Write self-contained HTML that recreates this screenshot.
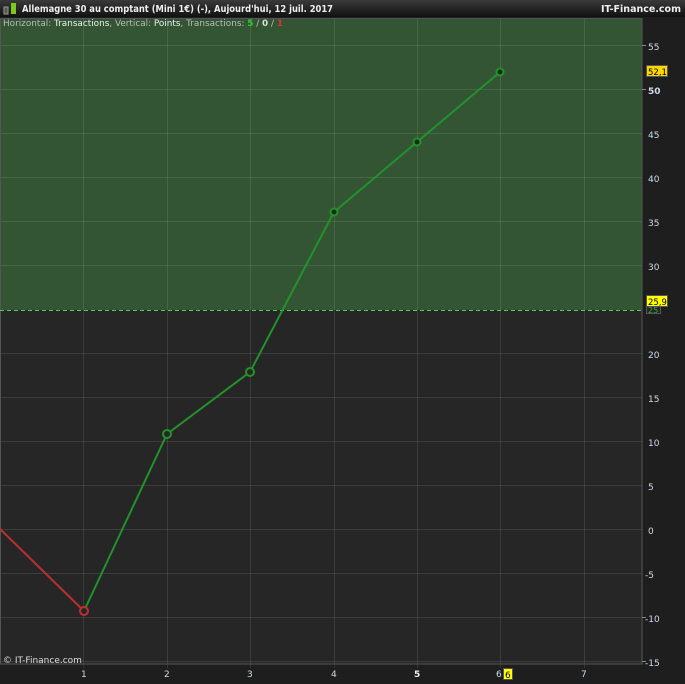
<!DOCTYPE html><html><head><style>body{margin:0;background:#1e1e1e;width:685px;height:680px;overflow:hidden;font-family:"DejaVu Sans",sans-serif}</style></head><body>
<svg width="685" height="680" xmlns="http://www.w3.org/2000/svg" font-family="DejaVu Sans, sans-serif">
<defs><linearGradient id="h" x1="0" y1="0" x2="0" y2="1"><stop offset="0" stop-color="#3a3a3a"/><stop offset="1" stop-color="#111"/></linearGradient></defs>
<rect width="685" height="680" fill="#1e1e1e"/>
<rect width="685" height="17" fill="url(#h)"/>
<rect x="4" y="7" width="4" height="7" fill="#555" stroke="#999" stroke-width="1"/>
<rect x="11" y="3" width="5" height="11" fill="#7ec820"/>
<text x="22" y="12" font-size="9.5" font-weight="bold" fill="#eee" textLength="311" lengthAdjust="spacingAndGlyphs">Allemagne 30 au comptant (Mini 1€) (-), Aujourd'hui, 12 juil. 2017</text>
<text x="681" y="12" font-size="9.5" font-weight="bold" fill="#eee" text-anchor="end">IT-Finance.com</text>
<rect x="0" y="18" width="642" height="292" fill="#335533"/>
<rect x="0" y="310" width="642" height="354" fill="#262626"/>
<g stroke="#ffffff" stroke-opacity="0.1" stroke-width="1">
<line x1="0" y1="45.5" x2="642" y2="45.5"/><line x1="0" y1="89.5" x2="642" y2="89.5"/><line x1="0" y1="133.5" x2="642" y2="133.5"/><line x1="0" y1="177.5" x2="642" y2="177.5"/><line x1="0" y1="221.5" x2="642" y2="221.5"/><line x1="0" y1="265.5" x2="642" y2="265.5"/><line x1="0" y1="353.5" x2="642" y2="353.5"/><line x1="0" y1="397.5" x2="642" y2="397.5"/><line x1="0" y1="441.5" x2="642" y2="441.5"/><line x1="0" y1="485.5" x2="642" y2="485.5"/><line x1="0" y1="529.5" x2="642" y2="529.5"/><line x1="0" y1="573.5" x2="642" y2="573.5"/><line x1="0" y1="617.5" x2="642" y2="617.5"/><line x1="0" y1="661.5" x2="642" y2="661.5"/>
<line x1="83.5" y1="18" x2="83.5" y2="668"/><line x1="167.5" y1="18" x2="167.5" y2="668"/><line x1="250.5" y1="18" x2="250.5" y2="668"/><line x1="334.5" y1="18" x2="334.5" y2="668"/><line x1="417.5" y1="18" x2="417.5" y2="668"/><line x1="500.5" y1="18" x2="500.5" y2="668"/><line x1="584.5" y1="18" x2="584.5" y2="668"/>
</g>
<rect x="0.5" y="18.5" width="641.5" height="645.5" fill="none" stroke="#555"/>
<line x1="0" y1="310.5" x2="642" y2="310.5" stroke="#5c5" stroke-dasharray="4,3"/>
<text x="3" y="26" font-size="9" fill="#bbb" textLength="280" lengthAdjust="spacingAndGlyphs">Horizontal: <tspan fill="#eee">Transactions</tspan>, Vertical: <tspan fill="#eee">Points</tspan>, Transactions: <tspan fill="#3c3" font-weight="bold">5</tspan> / <tspan fill="#ddd" font-weight="bold">0</tspan> / <tspan fill="#d33" font-weight="bold">1</tspan></text>
<polyline points="0,529 84,611" fill="none" stroke="#b83030" stroke-width="2"/>
<polyline points="84,611 167,434 250,372 334,212 417,142 500,72" fill="none" stroke="#22922a" stroke-width="2"/>
<circle cx="84" cy="611" r="4" fill="#262626" stroke="#c03030" stroke-width="2"/>
<g stroke="#22922a" stroke-width="2"><circle cx="167" cy="434" r="4" fill="#262626"/><circle cx="250" cy="372" r="4" fill="#262626"/><circle cx="334" cy="212" r="3.5" fill="#123012"/><circle cx="417" cy="142" r="3.5" fill="#123012"/><circle cx="500" cy="72" r="3.5" fill="#123012"/></g>
<g font-size="9" fill="#cde" stroke="none">
<text x="648" y="50">55</text><text x="648" y="94" font-weight="bold">50</text><text x="648" y="182">40</text><text x="648" y="138">45</text><text x="648" y="226">35</text><text x="648" y="270">30</text><text x="648" y="358">20</text><text x="648" y="402">15</text><text x="648" y="446">10</text><text x="648" y="490">5</text><text x="648" y="534">0</text><text x="645" y="578">-5</text><text x="645" y="622">-10</text><text x="645" y="666">-15</text>
<text x="81" y="677">1</text><text x="164" y="677">2</text><text x="247" y="677">3</text><text x="331" y="677">4</text><text x="414" y="677" font-weight="bold" fill="#eee">5</text><text x="496" y="677">6</text><text x="581" y="677">7</text>
</g>
<g stroke="#888" stroke-width="1"><line x1="642" y1="45.5" x2="646" y2="45.5"/><line x1="642" y1="89.5" x2="646" y2="89.5"/><line x1="642" y1="617.5" x2="646" y2="617.5"/><line x1="642" y1="661.5" x2="646" y2="661.5"/></g>
<rect x="646.5" y="304.5" width="14" height="9" fill="#262626" stroke="#555"/><text x="648" y="313" font-size="8" fill="#3a3">25</text>
<rect x="646.5" y="65.5" width="21" height="11" fill="#ffd700" stroke="#555"/><text x="648" y="75" font-size="8.5" fill="#000">52,1</text>
<rect x="646.5" y="295.5" width="21" height="11" fill="#ffff00" stroke="#555"/><text x="648" y="305" font-size="8.5" fill="#000">25,9</text>
<rect x="503.5" y="668.5" width="9" height="11" fill="#ffff00" stroke="#555"/><text x="505" y="678" font-size="9" fill="#000">6</text>
<text x="3" y="663" font-size="9" fill="#ddd">© IT-Finance.com</text>
</svg></body></html>
